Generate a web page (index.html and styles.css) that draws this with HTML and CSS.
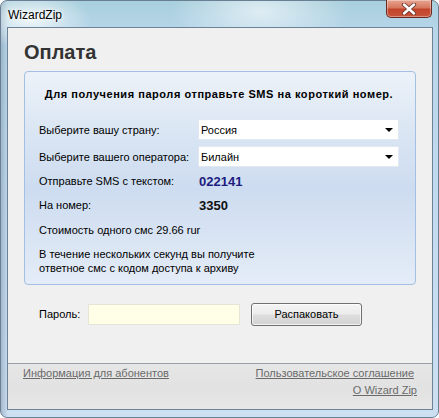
FILE: index.html
```html
<!DOCTYPE html>
<html lang="ru">
<head>
<meta charset="utf-8">
<title>WizardZip</title>
<link rel="stylesheet" href="styles.css">
</head>
<body>
<div class="window">
  <div class="titlebar">
    <span class="title">WizardZip</span>
    <div class="close">
      <svg width="16" height="12" viewBox="0 0 16 12">
        <path d="M3 1.5 L13 10.5 M13 1.5 L3 10.5" stroke="#6a3a30" stroke-width="4.2" stroke-linecap="round"/>
        <path d="M3 1.5 L13 10.5 M13 1.5 L3 10.5" stroke="#ffffff" stroke-width="2.4" stroke-linecap="round"/>
      </svg>
    </div>
  </div>
  <div class="client">
    <div class="main">
      <h1 class="heading">Оплата</h1>
      <div class="panel">
        <div class="panel-title">Для получения пароля отправьте SMS на короткий номер.</div>
        <div class="row row-select first">
          <span class="label">Выберите вашу страну:</span>
          <div class="select"><span>Россия</span><i class="arrow"></i></div>
        </div>
        <div class="row row-select">
          <span class="label">Выберите вашего оператора:</span>
          <div class="select"><span>Билайн</span><i class="arrow"></i></div>
        </div>
        <div class="row row-text r3">
          <span class="label">Отправьте SMS с текстом:</span>
          <span class="value code">022141</span>
        </div>
        <div class="row row-text">
          <span class="label">На номер:</span>
          <span class="value">3350</span>
        </div>
        <div class="row row-text r5">
          <span class="label wide">Стоимость одного смс 29.66 rur</span>
        </div>
        <p class="note">В течение нескольких секунд вы получите<br>ответное смс с кодом доступа к архиву</p>
      </div>
      <div class="password">
        <span class="plabel">Пароль:</span>
        <div class="input"></div>
        <div class="button">Распаковать</div>
      </div>
    </div>
    <div class="footer">
      <a class="link left">Информация для абонентов</a>
      <div class="right-links">
        <a class="link agree">Пользовательское соглашение</a>
        <a class="link about">О Wizard Zip</a>
      </div>
    </div>
  </div>
</div>
</body>
</html>
```

FILE: styles.css
```css
html, body {
  margin: 0;
  padding: 0;
  background: #ffffff;
}

body {
  font-family: "Liberation Sans", Arial, sans-serif;
  font-size: 11px;
  color: #000;
}

.window {
  width: 439px;
  height: 418px;
  box-sizing: border-box;
  padding: 0 5px 7px 6px;
  border-radius: 7px;
  border: 1px solid #6b7f94;
  display: flex;
  flex-direction: column;
  background:
    radial-gradient(ellipse 60px 30px at 30px 18px, rgba(255,255,255,0.8), rgba(255,255,255,0)),
    radial-gradient(ellipse 90px 40px at 260px 10px, rgba(255,255,255,0.6), rgba(255,255,255,0)),
    linear-gradient(90deg, rgba(110,130,150,0.4) 0px, rgba(110,130,150,0) 7px),
    linear-gradient(180deg, #a8cfdc 0px, #b7d6ea 30px, #c2daf0 200px, #cde0f2 418px);
}

.titlebar {
  height: 26px;
  display: flex;
  align-items: flex-start;
}

.title {
  font-family: "Liberation Sans", Arial, sans-serif;
  font-size: 12px;
  line-height: 14px;
  margin-top: 7px;
  padding-left: 1px;
  color: #000;
  text-shadow: 0 0 6px #fff, 0 0 3px #fff;
}

.close {
  margin-left: auto;
  margin-top: -1px;
  margin-right: 1px;
  width: 46px;
  height: 18px;
  box-sizing: border-box;
  border: 1px solid #6a2a20;
  border-top: none;
  border-radius: 0 0 5px 5px;
  background: linear-gradient(180deg, #e8a592 0%, #d6785f 45%, #c2442a 55%, #c9543a 100%);
  display: flex;
  align-items: center;
  justify-content: center;
  box-shadow: inset 0 0 0 1px rgba(255,255,255,0.35);
}

.client {
  flex: 1;
  border: 1px solid #6e8296;
  background: #f0f0f0;
  display: flex;
  flex-direction: column;
}

.main {
  flex: 1;
  padding: 12px 0 0 16px;
}

.heading {
  margin: 0;
  font-family: "Liberation Sans", Arial, sans-serif;
  font-size: 20px;
  line-height: 24px;
  font-weight: bold;
  color: #333333;
}

.panel {
  margin-top: 7px;
  width: 392px;
  height: 214px;
  box-sizing: border-box;
  border: 1px solid #a3c0e4;
  border-radius: 4px;
  background: linear-gradient(180deg, #edf2f9 0%, #d9e5f3 30%, #cddcf0 55%, #e4ecf7 100%);
  padding: 14px 16px 0 14px;
}

.panel-title {
  font-weight: bold;
  line-height: 16px;
  text-align: center;
  letter-spacing: 0.55px;
  color: #000;
}

.row {
  display: flex;
  align-items: center;
}

.row-select {
  height: 21px;
  margin-top: 6px;
}

.row-select.first {
  margin-top: 17px;
}

.label {
  width: 159px;
  flex: none;
  color: #000;
}

.label.wide {
  width: auto;
}

.select {
  flex: 1;
  height: 21px;
  box-sizing: border-box;
  background: #ffffff;
  border: 1px solid #e2e8f0;
  display: flex;
  align-items: center;
  padding-left: 2px;
  padding-right: 5px;
}

.select span {
  flex: 1;
}

.arrow {
  width: 0;
  height: 0;
  border-left: 4px solid transparent;
  border-right: 4px solid transparent;
  border-top: 4px solid #000;
}

.row-text {
  height: 24px;
}

.row-text.r3 {
  margin-top: 2px;
}

.row-text.r5 {
  height: 25px;
}

.value {
  font-weight: bold;
  font-size: 13px;
  color: #111;
  padding-left: 1px;
}

.value.code {
  color: #1c1c80;
}

.note {
  margin: 5px 0 0 0;
  line-height: 14px;
}

.password {
  margin-top: 17px;
  padding-left: 15px;
  height: 24px;
  display: flex;
  align-items: center;
}

.plabel {
  width: 49px;
  flex: none;
}

.input {
  width: 152px;
  height: 21px;
  box-sizing: border-box;
  background: #fffee6;
  border: 1px solid #e4e4d8;
}

.button {
  margin-left: 11px;
  width: 111px;
  height: 23px;
  box-sizing: border-box;
  border: 1px solid #707070;
  border-radius: 3px;
  background: linear-gradient(180deg, #f4f4f4 0%, #ececec 48%, #dedede 52%, #d2d2d2 100%);
  box-shadow: inset 0 0 0 1px rgba(255,255,255,0.7);
  display: flex;
  align-items: center;
  justify-content: center;
  color: #000;
}

.footer {
  height: 46px;
  box-sizing: border-box;
  border-top: 1px solid #9aa0a6;
  background: linear-gradient(180deg, #e6e6e6 0%, #e2e2e2 50%, #e6e6e6 100%);
  display: flex;
  justify-content: space-between;
  padding: 2px 15px 0 15px;
}

.link {
  color: #6a6a6a;
  text-decoration: underline;
  line-height: 14px;
  display: block;
}

.right-links {
  display: flex;
  flex-direction: column;
  align-items: flex-end;
  gap: 3px;
}

.link.agree {
  margin-right: 3px;
}
```
